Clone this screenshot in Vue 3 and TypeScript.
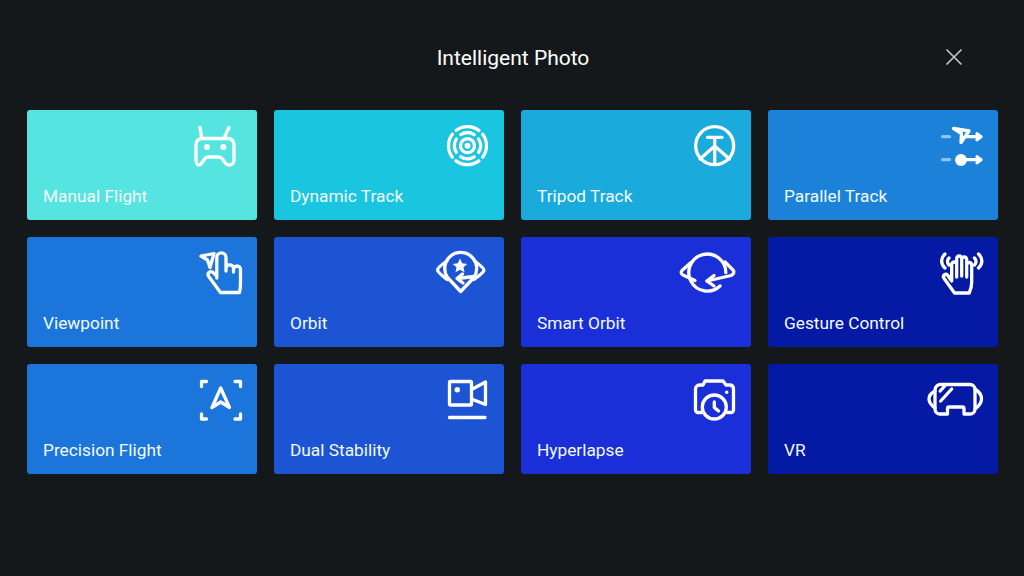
<script setup lang="ts">
interface Card {
  label: string
  bg: string
  icon: string
}

const rights = [257, 504, 751, 998]
const tops = [110, 237, 364]

// icon paths are written in screen coordinates, viewBox() moves them into the card
const cards: Card[] = [
  {
    label: 'Manual Flight',
    bg: '#56e4e0',
    icon: `<path d="M201.500 137 200 127.500M224.500 137 229 127.500"/>
      <path d="M202 138.500H228a6 6 0 0 1 6 6V160a5 5 0 0 1-5 5c-2 0-3-.8-4-2.200l-2.600-3.800c-1-1.400-2.200-2-3.600-2H208.200c-1.400 0-2.600.6-3.600 2L202 162.800c-1 1.400-2 2.200-3 2.200a3 5 0 0 1-3-5V144.500a6 6 0 0 1 6-6Z"/>
      <circle class="f" cx="207" cy="147" r="3"/><circle class="f" cx="223.300" cy="147" r="3"/>`,
  },
  {
    label: 'Dynamic Track',
    bg: '#1ac5e0',
    icon: `<circle cx="467.500" cy="145.700" r="19" stroke-width="3" pathLength="360" stroke-dasharray="74 16" transform="rotate(53 467.500 145.700)" stroke-linecap="butt"/>
      <circle cx="467.500" cy="145.700" r="13" stroke-width="2.800" pathLength="360" stroke-dasharray="62 28" transform="rotate(59 467.500 145.700)" stroke-linecap="butt"/>
      <circle cx="467.500" cy="145.700" r="7" stroke-width="2.200"/><circle class="f" cx="467.500" cy="145.700" r="3"/>`,
  },
  {
    label: 'Tripod Track',
    bg: '#1baadc',
    icon: `<circle cx="714.700" cy="145.700" r="19" stroke-width="3.600"/>
      <path d="M707.500 137.300H722M714.700 137.300V163M714.700 146 700 159M714.700 146 729.500 159"/>`,
  },
  {
    label: 'Parallel Track',
    bg: '#1b81d9',
    icon: `<path class="d" d="M942.500 136.700H949.500M942.500 159.700H949.500"/>
      <path stroke-width="2.800" d="M953.500 128.500 969 131 961 142.500 961.500 133.500Z"/>
      <path stroke-width="2.600" d="M966 136.700H980M977 133.700 981 136.700 977 139.700"/>
      <circle class="f" cx="961" cy="160" r="6"/>
      <path stroke-width="2.600" d="M965 159.700H980M977 156.700 981 159.700 977 162.700"/>`,
  },
  {
    label: 'Viewpoint',
    bg: '#1c75da',
    icon: `<path stroke-width="2.600" d="M201 256 214 253.500 210 267.500 207.500 260Z"/>
      <path d="M216.800 278V257.500a4.600 4.600 0 0 1 9.200 0V271M226 268a3.800 3.800 0 0 1 7.500 0V272M233.500 269.500a3.500 3.500 0 0 1 7 0V284c0 3-.5 6-1 8.500H220.500L208.800 276.500a3 3 0 0 1 .2-4 3 3 0 0 1 3.800-.2L216.800 276"/>`,
  },
  {
    label: 'Orbit',
    bg: '#1c54d4',
    icon: `<path d="M460.700 291.500 447.500 277.500a16 16 0 1 1 26.400 0Z"/>
      <path d="M447 261C441 265 437.500 268 437.500 270c0 2 5 6 9.500 9.500M474.500 261C480 265 484 268 484 270c0 2-5 6-10 9.500"/>
      <path class="f" d="m460 258.500 2.200 4.800 5 .6-3.700 3.400 1 5-4.500-2.500-4.500 2.500 1-5-3.700-3.400 5-.6Z"/>
      <path d="M474 276.500 457.500 278.500M462.500 274 457 278.500 463 283"/>`,
  },
  {
    label: 'Smart Orbit',
    bg: '#1b2fd8',
    icon: `<path d="M725.800 272.700A18.500 18.500 0 1 0 720 286"/>
      <path d="M691 262.500 682.500 270c-2 2-1.500 4 .5 5L695 280.500M725 262l8 8c2 2 .5 4-2 5.500L707 281"/>
      <path d="M714 275.500 707 281 714 286"/>`,
  },
  {
    label: 'Gesture Control',
    bg: '#0419a4',
    icon: `<path stroke-width="2.400" d="M954.500 293 943.800 278a2.400 2.400 0 0 1 3.700-3L951.700 281V264.500a2.500 2.500 0 0 1 5 0V258.500a2.500 2.500 0 0 1 5 0V259.500a2.500 2.500 0 0 1 5 0V265a2.500 2.500 0 0 1 5 0V282c0 4-1 8-2.500 11ZM956.700 264.500V277M961.700 258.500V276M966.700 265V277"/>
      <path stroke-width="2.200" d="M945 254c-4.500 4-4.500 10 0 14M949 258c-2 2-2 5 0 7M978.500 254c4.500 4 4.500 10 0 14M974.500 258c2 2 2 5 0 7"/>`,
  },
  {
    label: 'Precision Flight',
    bg: '#1c75da',
    icon: `<path stroke-width="3.400" d="M201.500 386.500V381.500H206.500M235 381.500H240.500V386.500M201.500 414V419H206.500M235 419H240.500V414"/>
      <path d="M220.700 388 229.500 407.500 220.700 402 212 407.500Z" stroke-width="3.600"/>`,
  },
  {
    label: 'Dual Stability',
    bg: '#1c54d4',
    icon: `<rect x="449.500" y="381.500" width="22" height="23.500" rx="1"/>
      <path d="M471.500 389.500 485.500 382V404.500L471.500 399"/>
      <circle class="f" cx="457.300" cy="389.700" r="2.700"/>
      <path stroke-width="3.500" d="M449.500 417.500H485"/>`,
  },
  {
    label: 'Hyperlapse',
    bg: '#1b2fd8',
    icon: `<path d="M702 412.500H698a2.500 2.500 0 0 1-2.500-2.500V389a4 4 0 0 1 4-4H703L705 381H723L726 385H730a4 4 0 0 1 3.500 4V410a2.500 2.500 0 0 1-2.500 2.500H727"/>
      <circle cx="714.300" cy="407" r="12"/>
      <circle class="f" cx="726.700" cy="392.300" r="1.700"/>
      <path stroke-width="2.500" d="M714.300 402V407.500L718.500 411"/>`,
  },
  {
    label: 'VR',
    bg: '#0419a4',
    icon: `<path d="M941 384.500H970a5 5 0 0 1 5 5V409a5 5 0 0 1-5 5H964V408.500a1.500 1.500 0 0 0-1.500-1.500H949a1.500 1.500 0 0 0-1.500 1.500V414H940a5 5 0 0 1-5-5V390a5.500 5.500 0 0 1 6-5.500Z"/>
      <path d="M975 389c4 2.500 6.500 6 6.500 10s-2.500 7-6.500 10M935 391c-4 2-6 5-6 8s2 6 6 9"/>
      <path stroke-width="2.400" d="M940.700 401 951.700 389M940.200 391 944.700 386"/>`,
  },
]

function viewBox(i: number): string {
  const x = rights[i % 4] - 72
  const y = tops[Math.floor(i / 4)] + 10
  return `${x} ${y} 60 60`
}
</script>

<template>
  <div class="screen">
    <header class="top">
      <span></span>
      <h1 class="title">Intelligent Photo</h1>
      <svg class="close" width="20" height="20" viewBox="0 0 20 20">
        <path d="M2.500 2.500 17.500 17.500M17.500 2.500 2.500 17.500" />
      </svg>
    </header>
    <main class="grid">
      <div v-for="(card, i) in cards" :key="card.label" class="card" :style="{ background: card.bg }">
        <svg class="icon" width="60" height="60" :viewBox="viewBox(i)" v-html="card.icon"></svg>
        <span class="label">{{ card.label }}</span>
      </div>
    </main>
  </div>
</template>

<style>
html,
body {
  background: #15181b;
}
</style>

<style scoped>
.screen {
  width: 1024px;
  height: 576px;
  background: #15181b;
  font-family: Roboto, "Liberation Sans", sans-serif;
  color: #fff;
  overflow: hidden;
}

.top {
  height: 110px;
  box-sizing: border-box;
  padding: 42px 60px 0 0;
  display: grid;
  grid-template-columns: 1fr auto 1fr;
  align-items: start;
}

.title {
  margin: 0 0 0 62px;
  font-size: 21px;
  font-weight: 400;
  line-height: 32px;
}

.close {
  justify-self: end;
  margin-top: 5px;
}

.close path {
  stroke: #c4c6c7;
  stroke-width: 1.6;
  fill: none;
}

.grid {
  display: grid;
  grid-template-columns: repeat(4, 230px);
  grid-auto-rows: 110px;
  gap: 17px;
  padding-left: 27px;
}

.card {
  display: flex;
  flex-direction: column;
  border-radius: 3px;
  overflow: hidden;
}

.icon {
  align-self: flex-end;
  margin: 10px 12px 0 0;
  flex: none;
  color: #fff;
}

.icon :deep(*) {
  fill: none;
  stroke: #fff;
  stroke-width: 3.3;
  stroke-linecap: round;
  stroke-linejoin: round;
}

.icon :deep(.f) {
  fill: #fff;
  stroke: none;
}

.icon :deep(.d) {
  stroke: #8fc2f0;
}

.label {
  margin-top: auto;
  padding: 0 0 12.5px 16px;
  font-size: 17.3px;
  line-height: 24px;
  color: #f2fbfd;
}
</style>
